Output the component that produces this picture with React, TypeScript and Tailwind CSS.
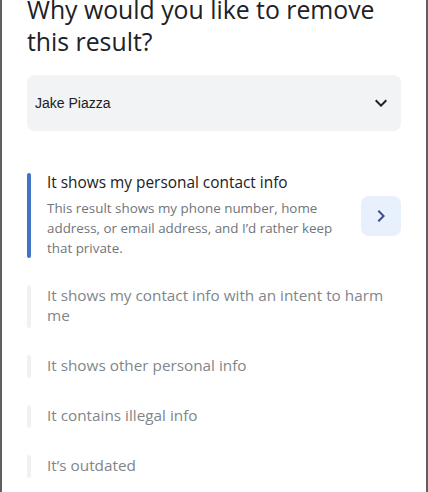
import React from "react";

const font = { fontFamily: '"Open Sans", "Noto Sans", sans-serif' };

function ChevronDown() {
  return (
    <svg width="24" height="24" viewBox="0 0 24 24" aria-hidden="true">
      <path d="M7.41 8.59 12 13.17l4.59-4.58L18 10l-6 6-6-6 1.41-1.41z" fill="#202124" />
    </svg>
  );
}

function ChevronRight() {
  return (
    <svg width="24" height="24" viewBox="0 0 24 24" aria-hidden="true">
      <path d="M8.59 16.59 13.17 12 8.59 7.41 10 6l6 6-6 6-1.41-1.41z" fill="#3a4c8c" />
    </svg>
  );
}

function Option({ label }: { label: string }) {
  return (
    <div className="flex">
      <div className="w-[4px] shrink-0 rounded-full bg-[#f1f1f1]" />
      <div className="ml-[16px] w-[345px] pb-[3px] text-[15.3px] leading-[20px] text-[#80868b]" style={font}>
        {label}
      </div>
    </div>
  );
}

export default function App() {
  return (
    <div className="h-[492px] w-[428px] overflow-hidden border-x-2 border-[#5f5f5f] bg-white">
      <div className="px-[25px]">
        <h1
          className="mt-[-7px] text-[24.8px] font-normal leading-[32px] text-[#202124]"
          style={font}
        >
          Why would you like to remove this result?
        </h1>

        <div className="mt-[18px] flex h-[56px] items-center justify-between rounded-[8px] bg-[#f1f3f4] pl-[8px] pr-[8px]">
          <span className="text-[14px] text-[#202124]" style={{ fontFamily: '"Liberation Sans", Arial, sans-serif' }}>
            Jake Piazza
          </span>
          <ChevronDown />
        </div>

        <div className="mt-[42px] flex flex-col gap-[27px]">
          <div className="flex items-center">
            <div className="flex flex-1">
              <div className="w-[4px] shrink-0 rounded-full bg-[#4274c4]" />
              <div className="ml-[16px] w-[294px]" style={font}>
                <div className="text-[15.4px] leading-[20px] text-[#202124]">It shows my personal contact info</div>
                <div className="mt-[5px] text-[13.4px] leading-[20px] text-[#70757a]">
                  This result shows my phone number, home address, or email address, and I’d rather keep that private.
                </div>
              </div>
            </div>
            <button className="flex h-[40px] w-[40px] items-center justify-center rounded-[8px] bg-[#e8f0fe]">
              <ChevronRight />
            </button>
          </div>

          <Option label="It shows my contact info with an intent to harm me" />
          <Option label="It shows other personal info" />
          <Option label="It contains illegal info" />
          <Option label="It’s outdated" />
        </div>
      </div>
    </div>
  );
}
